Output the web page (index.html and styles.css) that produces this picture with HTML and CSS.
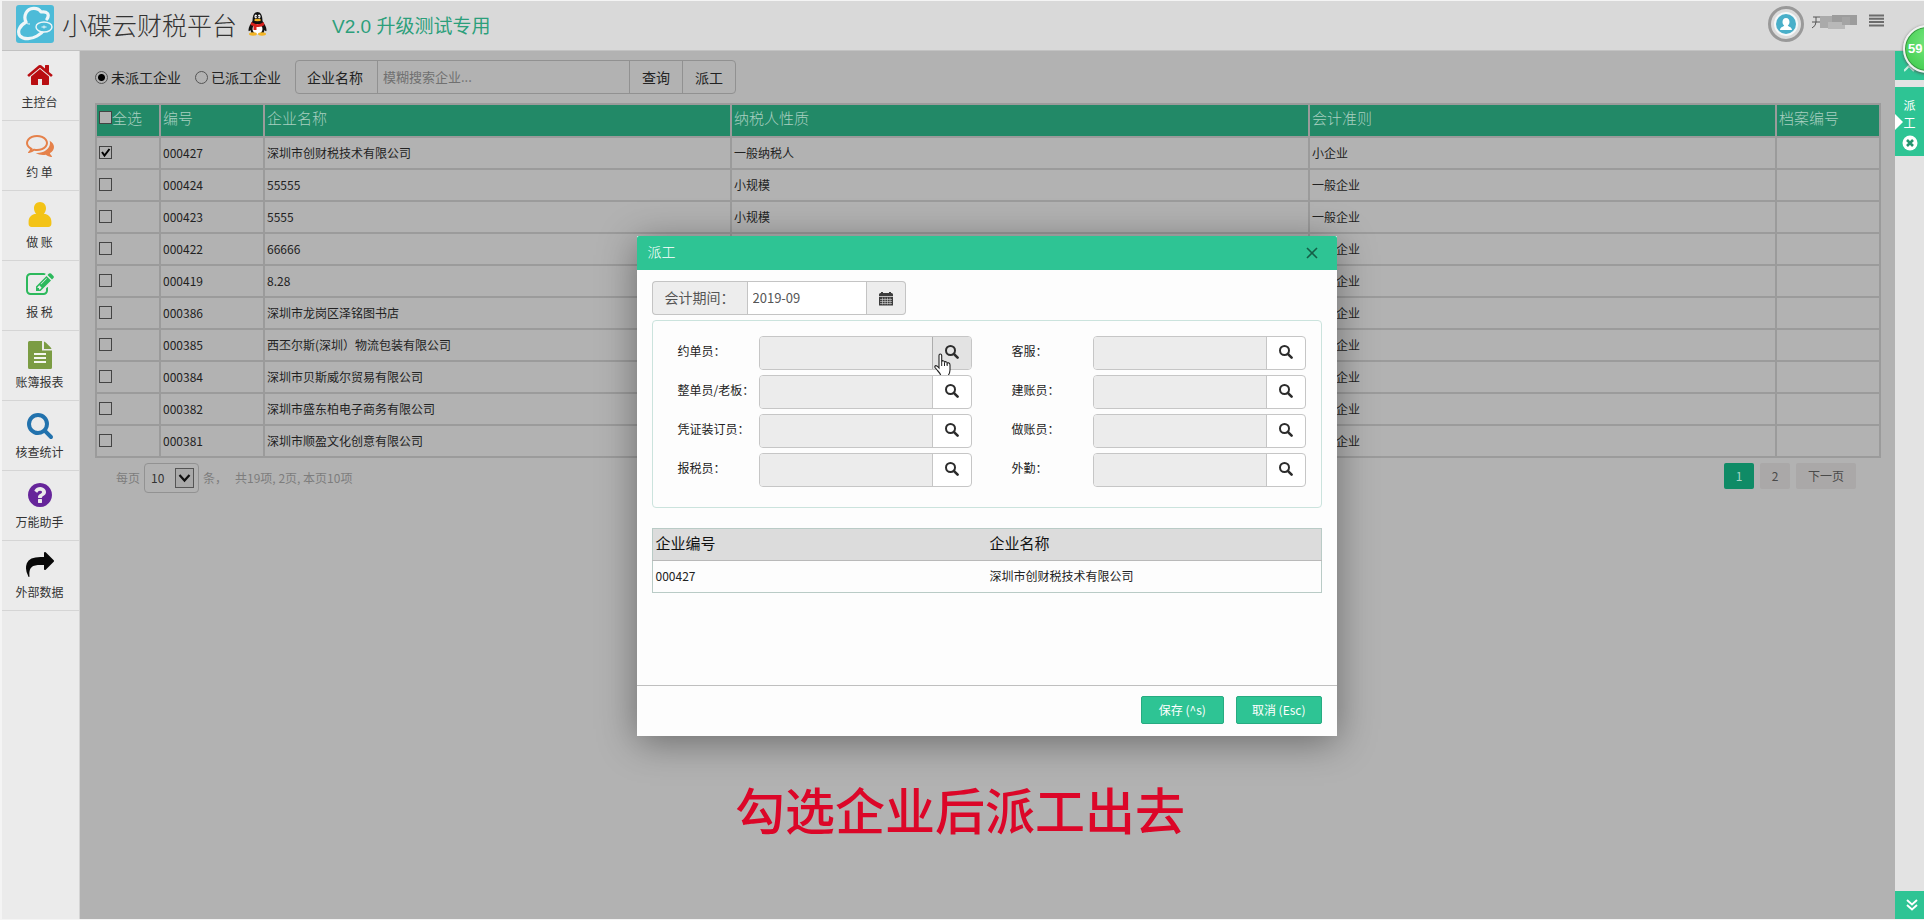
FILE: index.html
```html
<!DOCTYPE html>
<html lang="zh-CN">
<head>
<meta charset="utf-8">
<title>小碟云财税平台</title>
<link rel="stylesheet" href="styles.css">
</head>
<body>
<svg class="defs" width="0" height="0" aria-hidden="true">
  <symbol id="search" viewBox="0 0 14 14"><circle cx="5.5" cy="5.5" r="4.500" fill="none" stroke="currentColor" stroke-width="2"/><path d="M8.8 8.8l3.8 3.8" stroke="currentColor" stroke-width="2.6" stroke-linecap="round"/></symbol>
</svg>
<div class="app">
  <header class="topbar">
    <svg class="logo" viewBox="0 0 38 38" aria-hidden="true"><rect width="38" height="38" rx="3" fill="#4dbbd8"/><path d="M31 14c3-5 0-8-6-7-3-5-12-5-15 1-2 4-1 7 0 9-7 4-9 10-6 14 4 4 12 3 17 0 3-2 5-3 6-5" fill="none" stroke="#eef6f8" stroke-width="3.200" stroke-linecap="round" stroke-linejoin="round"/><path d="M10 17c1 2 2 2 4 2" fill="none" stroke="#eef6f8" stroke-width="1"/><ellipse cx="28" cy="22" rx="8" ry="5" fill="#4dbbd8" stroke="#eef6f8" stroke-width="1.4"/><path d="M25.500 22h5M28 20.500v3" stroke="#eef6f8" stroke-width="1"/></svg>
    <h1 class="brand">小碟云财税平台</h1>
    <svg class="qq" viewBox="0 0 20 24" aria-hidden="true"><path d="M5 9C5 3 7 0 10 0s5 3 5 9c2 3 4 6 4 9 0 2-1 1-2 0l-1 3H4l-1-3c-1 1-2 2-2 0 0-3 2-6 4-9z" fill="#111"/><ellipse cx="10" cy="17" rx="5" ry="5" fill="#fff"/><ellipse cx="5.500" cy="22" rx="4" ry="1.700" fill="#f3b526"/><ellipse cx="14.500" cy="22" rx="4" ry="1.700" fill="#f3b526"/><path d="M4 10c4 3 8 3 12 0l1 3c-3 2-6 2-8 2v3H6v-4l-3-1z" fill="#d6201c"/><ellipse cx="8.300" cy="4.500" rx="1.300" ry="1.900" fill="#fff"/><ellipse cx="11.700" cy="4.500" rx="1.300" ry="1.900" fill="#fff"/><circle cx="8.700" cy="4.700" r=".6"/><circle cx="11.300" cy="4.700" r=".6"/><ellipse cx="10" cy="8" rx="3.400" ry="1.200" fill="#f3b526"/></svg>
    <span class="version">V2.0 升级测试专用</span>
    <div class="account">
      <svg class="avatar" viewBox="0 0 36 36" aria-hidden="true"><circle cx="18" cy="18" r="16.500" fill="#dcdcdc" stroke="#999" stroke-width="3"/><circle cx="18" cy="18" r="12" fill="#f4f8f9"/><circle cx="18" cy="18" r="10" fill="#49afc9"/><path d="M18 12c2.400 0 3.500 1.700 3.500 4 0 1.800-1 3-1.700 3.600.4 1.400 4.200 1.400 4.200 4.400H12c0-3 3.800-3 4.200-4.400-.7-.6-1.700-1.800-1.700-3.600 0-2.300 1.100-4 3.500-4z" fill="#fff"/></svg>
      <svg class="masked" viewBox="0 0 45 16" aria-hidden="true"><path d="M1 3h9M0 8h10M4 3v5q0 4-4 6" fill="none" stroke="#555"/><path fill="#aaa" d="M8 2h12v12H8z"/><path fill="#9c9c9c" d="M20 1h25v10H20z"/><path fill="#b8b8b8" d="M16 8h17v7H16z"/><path fill="#a4a4a4" d="M30 3h8v8h-8z"/></svg>
      <button class="menu" aria-label="菜单"><svg viewBox="0 0 15 13"><path d="M0 1.500h15M0 4.800h15M0 8.100h15M0 11.400h15" stroke="#6c6c6c" stroke-width="2"/></svg></button>
    </div>
  </header>
  <div class="workspace">
    <nav class="sidebar">
      <a class="nav-item" href="#"><svg viewBox="0 0 1664 1792" fill="#b90e12"><path d="M1408 992v480q0 26-19 45t-45 19h-384v-384h-256v384h-384q-26 0-45-19t-19-45v-480q0-1 .5-3t.5-3l575-474 575 474q1 2 1 6zm223-69l-62 74q-8 9-21 11h-3q-13 0-21-7l-692-577-692 577q-12 8-24 7-13-2-21-11l-62-74q-8-10-7-23.500t11-21.500l719-599q32-26 76-26t76 26l244 204v-195q0-14 9-23t23-9h192q14 0 23 9t9 23v408l219 182q10 8 11 21.500t-7 23.500z"/></svg><span>主控台</span></a>
      <a class="nav-item" href="#"><svg viewBox="0 0 1792 1792" fill="#e5814a"><path d="M704 384q-153 0-286 52t-211.500 141-78.500 191q0 82 53 158t149 132l97 56-35 84q34-20 62-39l44-31 53 10q78 14 153 14 153 0 286-52t211.500-141 78.500-191-78.500-191-211.500-141-286-52zm0-128q191 0 353.500 68.500t256.500 186.500 94 257-94 257-256.500 186.500-353.500 68.500q-86 0-176-16-124 88-278 128-36 9-86 16h-3q-11 0-20.500-8t-11.500-21q-1-3-1-6.500t.5-6.500 2-6l2.500-5 3.500-5.500 4-5 4.500-5 4-4.500q5-6 23-25t26-29.500 22.500-29 25-38.500 20.500-44q-124-72-195-177t-71-224q0-139 94-257t256.500-186.500 353.500-68.500zm822 1169q10 24 20.500 44t25 38.500 22.500 29 26 29.500 23 25q1 1 4 4.500t4.500 5 4 5 3.500 5.500l2.500 5 2 6 .5 6.500-1 6.500q-3 14-13 22t-22 7q-50-7-86-16-154-40-278-128-90 16-176 16-271 0-472-132 58 4 88 4 161 0 309-45t264-129q125-92 192-212t67-254q0-77-23-152 129 71 204 178t75 230q0 120-71 224.500t-195 176.500z"/></svg><span>约 单</span></a>
      <a class="nav-item" href="#"><svg viewBox="0 -1 22 27" fill="#f3c316"><path d="M11 0c3.400 0 5.800 2.700 5.800 6 0 2-.8 4-2.200 5.400C19 12 22 14.500 22 19v2c0 2-1 3-3 3H3c-2 0-3-1-3-3v-2c0-4.500 3-7 7.400-7.600C6 10 5.200 8 5.200 6c0-3.300 2.400-6 5.800-6z"/></svg><span>做 账</span></a>
      <a class="nav-item" href="#"><svg viewBox="0 0 1792 1792" fill="#2cb95c"><path d="M888 1184l116-116-152-152-116 116v56h96v96h56zm440-720q-16-16-33 1l-350 350q-17 17-1 33t33-1l350-350q17-17 1-33zm80 594v190q0 119-84.500 203.500t-203.500 84.500h-832q-119 0-203.500-84.500t-84.500-203.500v-832q0-119 84.500-203.500t203.500-84.500h832q63 0 117 25 15 7 18 23 3 17-9 29l-49 49q-14 14-32 8-23-6-45-6h-832q-66 0-113 47t-47 113v832q0 66 47 113t113 47h832q66 0 113-47t47-113v-126q0-13 9-22l64-64q15-15 35-7t20 29zm-96-738l288 288-672 672h-288v-288zm444 132l-92 92-288-288 92-92q28-28 68-28t68 28l152 152q28 28 28 68t-28 68z"/></svg><span>报 税</span></a>
      <a class="nav-item" href="#"><svg viewBox="0 0 24 28"><path d="M1.500 0H14v9.500h10v17q0 1.500-1.500 1.500h-21Q0 28 0 26.500v-25Q0 0 1.500 0zM16 .5q1 .3 2 1.300l4.300 4.200q.9.900 1.200 2H16z" fill="#7b9c43"/><path d="M6 13h12M6 17h12M6 21h12" stroke="#f4f7ee" stroke-width="1.800"/></svg><span>账簿报表</span></a>
      <a class="nav-item" href="#"><svg viewBox="0 0 1664 1792" fill="#2272ad"><path d="M1152 832q0-185-131.500-316.500t-316.500-131.500-316.500 131.500-131.500 316.500 131.500 316.500 316.500 131.500 316.500-131.500 131.500-316.500zm512 832q0 52-38 90t-90 38q-54 0-90-38l-343-342q-179 124-399 124-143 0-273.500-55.500t-225-150-150-225-55.500-273.500 55.500-273.500 150-225 225-150 273.500-55.500 273.500 55.500 225 150 150 225 55.500 273.500q0 220-124 399l343 343q37 37 37 90z"/></svg><span>核查统计</span></a>
      <a class="nav-item" href="#"><svg viewBox="0 0 1536 1792" fill="#66259a"><path d="M896 1376v-192q0-14-9-23t-23-9h-192q-14 0-23 9t-9 23v192q0 14 9 23t23 9h192q14 0 23-9t9-23zm256-672q0-88-55.500-163t-138.500-116-170-41q-243 0-371 213-15 24 8 42l132 100q7 6 19 6 16 0 25-12 53-68 86-92 34-24 86-24 48 0 85.500 26t37.500 59q0 38-20 61t-68 45q-63 28-115.500 86.500t-52.500 125.500v36q0 14 9 23t23 9h192q14 0 23-9t9-23q0-19 21.500-49.500t54.500-49.500q32-18 49-28.500t46-35 44.500-48 28-60.500 12.500-81zm384 192q0 209-103 385.500t-279.500 279.500-385.500 103-385.500-103-279.500-279.500-103-385.500 103-385.500 279.500-279.500 385.500-103 385.500 103 279.500 279.500 103 385.500z"/></svg><span>万能助手</span></a>
      <a class="nav-item" href="#"><svg viewBox="0 0 1792 1792" fill="#080808"><path d="M1792 640q0 26-19 45l-512 512q-19 19-45 19t-45-19-19-45v-256h-224q-98 0-175.500 6t-154 21.500-133 42.500-105.500 69.500-80 101-48.500 138.500-17.500 181q0 55 5 123 0 6 2.500 23.500t2.500 26.500q0 15-8.500 25t-23.500 10q-16 0-28-17-7-9-13-22t-13.500-30-10.500-24q-127-285-127-451 0-199 53-333 162-403 875-403h224v-256q0-26 19-45t45-19 45 19l512 512q19 19 19 45z"/></svg><span>外部数据</span></a>
    </nav>
    <main class="main">
      <form class="filters">
        <label class="radio"><input type="radio" name="state" checked>未派工企业</label>
        <label class="radio"><input type="radio" name="state">已派工企业</label>
        <div class="search-group">
          <label for="company">企业名称</label>
          <input id="company" type="text" placeholder="模糊搜索企业...">
          <button type="button">查询</button>
          <button type="button">派工</button>
        </div>
      </form>
      <table class="grid">
        <colgroup><col class="c-check"><col class="c-code"><col class="c-name"><col class="c-tax"><col class="c-rule"><col class="c-file"></colgroup>
        <thead><tr><th><label class="all"><input type="checkbox">全选</label></th><th>编号</th><th>企业名称</th><th>纳税人性质</th><th>会计准则</th><th>档案编号</th></tr></thead>
        <tbody>
          <tr><td><span class="tick"><input type="checkbox" aria-label="000427" checked><svg viewBox="0 0 13 13" aria-hidden="true"><path d="M3 6l2.500 3.500L10.500 3" fill="none" stroke="#000" stroke-width="2"/></svg></span></td><td>000427</td><td>深圳市创财税技术有限公司</td><td>一般纳税人</td><td>小企业</td><td></td></tr>
          <tr><td><input type="checkbox" aria-label="000424"></td><td>000424</td><td>55555</td><td>小规模</td><td>一般企业</td><td></td></tr>
          <tr><td><input type="checkbox" aria-label="000423"></td><td>000423</td><td>5555</td><td>小规模</td><td>一般企业</td><td></td></tr>
          <tr><td><input type="checkbox" aria-label="000422"></td><td>000422</td><td>66666</td><td></td><td>一般企业</td><td></td></tr>
          <tr><td><input type="checkbox" aria-label="000419"></td><td>000419</td><td>8.28</td><td></td><td>一般企业</td><td></td></tr>
          <tr><td><input type="checkbox" aria-label="000386"></td><td>000386</td><td>深圳市龙岗区泽铭图书店</td><td></td><td>一般企业</td><td></td></tr>
          <tr><td><input type="checkbox" aria-label="000385"></td><td>000385</td><td>西丕尔斯(深圳）物流包装有限公司</td><td></td><td>一般企业</td><td></td></tr>
          <tr><td><input type="checkbox" aria-label="000384"></td><td>000384</td><td>深圳市贝斯威尔贸易有限公司</td><td></td><td>一般企业</td><td></td></tr>
          <tr><td><input type="checkbox" aria-label="000382"></td><td>000382</td><td>深圳市盛东柏电子商务有限公司</td><td></td><td>一般企业</td><td></td></tr>
          <tr><td><input type="checkbox" aria-label="000381"></td><td>000381</td><td>深圳市顺盈文化创意有限公司</td><td></td><td>一般企业</td><td></td></tr>
        </tbody>
      </table>
      <div class="table-foot">
        <div class="page-size">
          <label for="size">每页</label>
          <span class="select"><select id="size"><option>10</option></select><svg viewBox="0 0 19 20" aria-hidden="true"><rect x=".5" y=".5" width="18" height="19" fill="#a9a9a9" stroke="#555"/><path d="M4.500 7l5 5.500 5-5.500" fill="none" stroke="#111" stroke-width="2.200"/></svg></span>
          <span>条，</span><span class="total">共19项, 2页, 本页10项</span>
        </div>
        <div class="pager"><button class="current">1</button><button>2</button><button class="next">下一页</button></div>
      </div>

      <div class="overlay">
        <section class="modal" role="dialog" aria-labelledby="dlg-title">
          <div class="modal-head"><h2 id="dlg-title">派工</h2><button class="close" aria-label="关闭"><svg viewBox="0 0 12 12"><path d="M1 1l10 10M11 1L1 11" stroke="#155e47" stroke-width="1.600"/></svg></button></div>
          <div class="modal-body">
            <div class="period">
              <label for="period">会计期间：</label>
              <input id="period" type="text" value="2019-09">
              <button aria-label="选择日期"><svg viewBox="0 0 14 14"><path d="M0 3q0-1.500 1.500-1.500H2V.5h2v1h6v-1h2v1h.5Q14 1.500 14 3v1.500H0zM0 5.300h14V14H0z" fill="#3d3d3d"/><path d="M1 8h12M1 10h12M1 12h12M3.500 6v7M6 6v7M8.500 6v7M11 6v7" stroke="#d8d8d8" stroke-width=".6"/></svg></button>
            </div>
            <div class="staff">
              <div class="field"><label for="f1">约单员：</label><div class="pick hover"><input id="f1" type="text" readonly><button aria-label="查找约单员"><svg><use href="#search"/></svg></button><svg class="pointer" viewBox="0 0 18 24" aria-hidden="true"><path d="M5 14V2.500Q5 1 6.300 1T7.700 2.500V9q.3-1.500 1.500-1.300 1.300.1 1.300 1.800.3-1 1.500-.8 1.200.2 1.200 1.600.4-.7 1.500-.4 1.300.4 1.300 2V17q0 3-2 6H7q-1-3-3.500-5.500L1 14.500q-.6-1.500.8-1.900Q3 12.400 5 15z" fill="#fff" stroke="#222" stroke-width="1.100"/><path d="M7.700 9v4M10.500 9.500V13M13.200 10.500V13" stroke="#222"/></svg></div></div>
              <div class="field"><label for="f2">客服：</label><div class="pick"><input id="f2" type="text" readonly><button aria-label="查找客服"><svg><use href="#search"/></svg></button></div></div>
              <div class="field"><label for="f3">整单员/老板：</label><div class="pick"><input id="f3" type="text" readonly><button aria-label="查找整单员"><svg><use href="#search"/></svg></button></div></div>
              <div class="field"><label for="f4">建账员：</label><div class="pick"><input id="f4" type="text" readonly><button aria-label="查找建账员"><svg><use href="#search"/></svg></button></div></div>
              <div class="field"><label for="f5">凭证装订员：</label><div class="pick"><input id="f5" type="text" readonly><button aria-label="查找凭证装订员"><svg><use href="#search"/></svg></button></div></div>
              <div class="field"><label for="f6">做账员：</label><div class="pick"><input id="f6" type="text" readonly><button aria-label="查找做账员"><svg><use href="#search"/></svg></button></div></div>
              <div class="field"><label for="f7">报税员：</label><div class="pick"><input id="f7" type="text" readonly><button aria-label="查找报税员"><svg><use href="#search"/></svg></button></div></div>
              <div class="field"><label for="f8">外勤：</label><div class="pick"><input id="f8" type="text" readonly><button aria-label="查找外勤"><svg><use href="#search"/></svg></button></div></div>
            </div>
            <table class="chosen">
              <thead><tr><th>企业编号</th><th>企业名称</th></tr></thead>
              <tbody><tr><td>000427</td><td>深圳市创财税技术有限公司</td></tr></tbody>
            </table>
          </div>
          <div class="modal-foot"><button>保存 (^s)</button><button>取消 (Esc)</button></div>
        </section>
      </div>
    </main>
    <aside class="rail">
      <button class="tab tab-first" aria-label="收起"><svg viewBox="0 0 12 12"><path d="M0 11l5-5 5 5" fill="none" stroke="#c9f2e2" stroke-width="2"/></svg></button>
      <div class="tab tab-active"><span>派</span><span>工</span><button aria-label="关闭派工"><svg viewBox="0 0 16 16"><circle cx="8" cy="8" r="7.500" fill="#fff"/><path d="M5 5l6 6M11 5l-6 6" stroke="#25936e" stroke-width="2.600"/></svg></button></div>
      <button class="tab tab-last" aria-label="更多"><svg viewBox="0 0 12 12"><path d="M1 1l5 4.500L11 1M1 6l5 4.500L11 6" fill="none" stroke="#fff" stroke-width="1.900"/></svg></button>
    </aside>
  </div>
  <div class="ball">59</div>
  <p class="caption">勾选企业后派工出去</p>
</div>
</body>
</html>
```
FILE: styles.css
```css
* { box-sizing: border-box; }
body { margin: 0; background: #f4f4f4; color: #222; font: 12px/18px "Noto Sans CJK SC", sans-serif; }
input, button, select { font: inherit; color: inherit; margin: 0; }
button { padding: 0; border: 0; background: none; display: flex; align-items: center; justify-content: center; }
svg { display: block; }
.defs { position: absolute; }
.app { position: relative; display: flex; flex-direction: column; min-height: 100vh; padding: 1px 0 1px 2px; overflow: hidden; }

.topbar { display: flex; align-items: center; height: 50px; padding: 0 40px 4px 14px; background: #d9d9d9; border-bottom: 1px solid #c2c2c2; }
.logo { width: 38px; height: 38px; }
.brand { margin: 0 10px 0 8px; font-size: 25px; line-height: 36px; font-weight: 300; color: #333; }
.qq { width: 21px; height: 24px; }
.version { margin-left: 64px; padding-top: 6px; font: 19px/24px "Liberation Sans", "Noto Sans CJK SC", sans-serif; color: #2c9f7b; }
.account { margin-left: auto; display: flex; align-items: center; }
.avatar { width: 36px; height: 36px; }
.masked { width: 45px; height: 16px; margin: 0 12px 4px 8px; }
.menu { width: 15px; height: 13px; margin-bottom: 6px; }
.menu svg { width: 15px; height: 13px; }

.workspace { flex: 1; display: flex; }
.sidebar { width: 78px; background: #ebebeb; border-right: 1px solid #d4d4d4; }
.nav-item { display: flex; flex-direction: column; align-items: center; height: 70px; padding: 10px 2px 0 0; border-bottom: 1px solid #d5d5d5; color: #333; text-decoration: none; }
.nav-item svg { width: 28px; height: 28px; margin-bottom: 4px; }

.main { position: relative; flex: 1; min-width: 0; padding: 9px 14px 0 15px; background: #b2b2b2; }
.filters { display: flex; align-items: center; gap: 14px; margin-bottom: 9px; font-size: 14px; }
.radio { display: flex; align-items: center; gap: 3px; }
.radio input { appearance: none; width: 13px; height: 13px; border: 1px solid #555; border-radius: 50%; }
.radio input:checked { background: radial-gradient(#000 0 3px, transparent 4px); }
.search-group { display: flex; height: 34px; border: 1px solid #919191; border-radius: 4px; }
.search-group label { padding: 7px 11px; width: 81px; white-space: nowrap; }
.search-group input { width: 253px; padding: 0 5px; border: 0; border-left: 1px solid #919191; border-right: 1px solid #919191; background: none; font-size: 13px; }
.search-group input::placeholder { color: #707070; }
.search-group button { width: 52px; }
.search-group button + button { width: 53px; border-left: 1px solid #919191; }

.grid { width: 100%; table-layout: fixed; border-collapse: collapse; border: 2px solid #8f8f8f; }
.c-check { width: 64px; }
.c-code { width: 104px; }
.c-name, .c-rule { width: 467px; }
.c-file { width: 104px; }
.grid th, .grid td { height: 32px; padding: 0 2px; border: 2px solid #9b9b9b; text-align: left; overflow: hidden; white-space: nowrap; }
.grid th { height: 33px; background: #228967; color: #a8cfc0; font-size: 15px; font-weight: 300; vertical-align: top; padding-top: 4px; }
.all { display: flex; align-items: center; }
.grid input { appearance: none; display: block; width: 13px; height: 13px; border: 1px solid #444; margin-bottom: 2px; }
.grid th input { background: #b2b2b2; }
.tick { position: relative; display: block; }
.tick svg { position: absolute; left: 0; top: 0; width: 13px; height: 13px; pointer-events: none; }

.table-foot { display: flex; justify-content: space-between; padding: 5px 25px 0 21px; }
.page-size { display: flex; align-items: center; gap: 4px; color: #7d7d7d; }
.select { position: relative; width: 55px; height: 30px; border: 1px solid #929292; border-radius: 4px; color: #333; }
.select select { appearance: none; width: 100%; height: 100%; padding: 0 6px; border: 0; background: none; }
.select svg { position: absolute; right: 4px; top: 4px; width: 19px; height: 20px; pointer-events: none; }
.total { margin-left: 4px; }
.pager { display: flex; gap: 6px; }
.pager button { width: 30px; height: 26px; border-radius: 2px; background: #aaa8a8; color: #4a4a4a; }
.pager .current { background: #0f8b66; color: #a9d6c7; }
.pager .next { width: 60px; }

.overlay { position: absolute; inset: 0; display: flex; align-items: center; justify-content: center; padding: 2px 2px 0 0; }
.modal { display: flex; flex-direction: column; width: 700px; min-height: 500px; background: #fdfdfd; box-shadow: 0 6px 36px rgba(0, 0, 0, .4); }
.modal-head { display: flex; align-items: center; justify-content: space-between; height: 34px; padding: 0 19px 0 11px; background: #2ec494; border-radius: 2px 2px 0 0; }
.modal-head h2 { margin: 0 0 4px; font-size: 14px; font-weight: 300; color: #fff; }
.close svg { width: 12px; height: 12px; }
.modal-body { flex: 1; padding: 11px 15px 0; }
.period { display: flex; height: 34px; width: 254px; margin-bottom: 5px; color: #555; font-size: 14px; }
.period label { width: 95px; padding: 6px 12px; white-space: nowrap; background: #ededed; border: 1px solid #c4c4c4; border-right: 0; border-radius: 4px 0 0 4px; line-height: 18px; }
.period input { width: 120px; padding: 0 5px; border: 1px solid #c4c4c4; background: #fff; font-size: 13px; }
.period button { width: 39px; background: #ededed; border: 1px solid #c4c4c4; border-left: 0; border-radius: 0 4px 4px 0; }
.period button svg { width: 14px; height: 15px; }
.staff { display: grid; grid-template-columns: 1fr 1fr; gap: 5px 39px; padding: 15px 15px 20px 24px; border: 1px solid #cbe3dd; border-radius: 4px; }
.field { display: flex; }
.field label { width: 82px; padding: 6px 0 0 1px; white-space: nowrap; }
.pick { position: relative; flex: 1; display: flex; height: 34px; border: 1px solid #c6c6c6; border-radius: 4px; background: #fff; overflow: hidden; }
.pick input { flex: 1; min-width: 0; border: 0; border-right: 1px solid #c6c6c6; background: #ececec; }
.pick button { width: 38px; padding-bottom: 2px; color: #2c2c2c; }
.pick button svg { width: 14px; height: 14px; }
.pick.hover { overflow: visible; }
.pick.hover input { border-radius: 3px 0 0 3px; border-color: #adadad; }
.pick.hover button { background: #e3e3e3; border-radius: 0 3px 3px 0; }
.pointer { position: absolute; right: 19px; top: 16px; width: 18px; height: 24px; }
.chosen { width: 100%; margin-top: 20px; table-layout: fixed; border-collapse: collapse; border: 1px solid #b9cbc6; }
.chosen th, .chosen td { height: 32px; padding: 0 3px 2px; text-align: left; }
.chosen th { background: #dcdcdc; color: #111; font-size: 15px; font-weight: 400; padding-bottom: 4px; border-bottom: 1px solid #b9b9b9; }
.modal-foot { display: flex; justify-content: flex-end; gap: 12px; height: 51px; padding: 10px 15px 0; border-top: 1px solid #bfbfbf; }
.modal-foot button { min-width: 83px; height: 28px; padding: 0 15px; background: #2ec494; border: 1px solid #27ab81; border-radius: 2px; color: #fff; }

.rail { display: flex; flex-direction: column; width: 29px; background: #e3e3e3; }
.tab { background: #2ec494; color: #fff; }
.tab svg { width: 12px; height: 12px; }
.tab-first { height: 29px; margin-bottom: 7px; }
.tab-active { position: relative; display: flex; flex-direction: column; align-items: center; height: 69px; padding-top: 9px; }
.tab-active::before { content: ""; position: absolute; left: 0; top: 27px; border: 8px solid transparent; border-left-color: #fff; border-right: 0; }
.tab-active button { margin-top: 3px; }
.tab-active svg { width: 16px; height: 16px; }
.tab-last { height: 28px; margin-top: auto; padding-left: 4px; }

.ball { position: absolute; right: -27px; top: 25px; width: 48px; height: 48px; padding-left: 3px; border: 2px solid #f0f0f0; border-radius: 50%; background: radial-gradient(circle at 60% 35%, #7be884, #35c843); box-shadow: inset 0 0 0 1px #3a9444, 0 1px 3px #555; color: #fff; font: bold 13px/44px "Liberation Sans", sans-serif; }
.caption { position: absolute; left: 0; right: 4px; bottom: 82px; margin: 0; text-align: center; color: #dc0628; font-size: 50px; line-height: 60px; font-weight: 500; }
```
